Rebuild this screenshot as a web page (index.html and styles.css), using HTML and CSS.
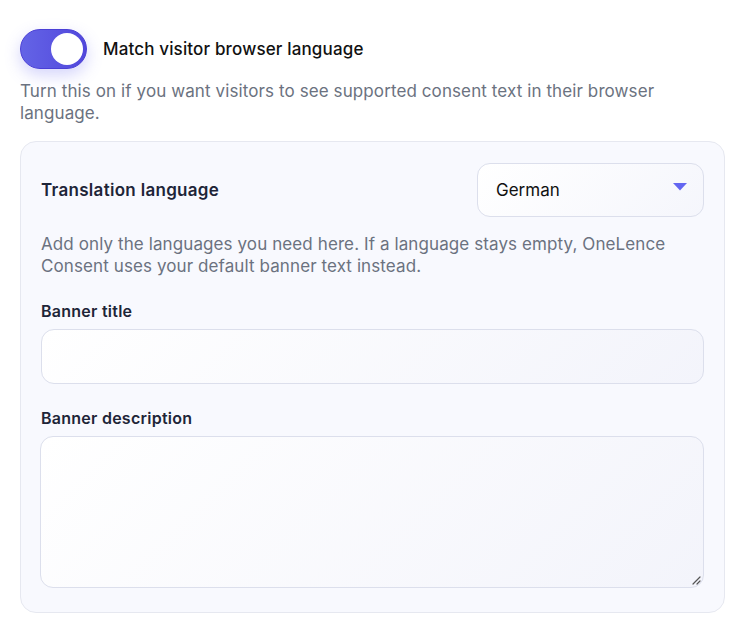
FILE: index.html
```html
<!DOCTYPE html>
<html lang="en">
<head>
<meta charset="utf-8">
<title>Translation settings</title>
<link rel="stylesheet" href="styles.css">
</head>
<body>
<div class="page">
  <label class="toggle-row">
    <span class="switch"><span class="knob"></span></span>
    <span class="toggle-label">Match visitor browser language</span>
  </label>
  <p class="hint">Turn this on if you want visitors to see supported consent text in their browser language.</p>

  <section class="card">
    <div class="lang-row">
      <span class="field-title">Translation language</span>
      <div class="select">
        <span>German</span>
        <svg class="caret" width="14" height="8" viewBox="0 0 14 8"><path d="M0 0 H14 L7 7.5 Z" fill="#6366f1"/></svg>
      </div>
    </div>
    <p class="hint card-hint">Add only the languages you need here. If a language stays empty, OneLence Consent uses your default banner text instead.</p>

    <label class="field-label">Banner title</label>
    <div class="input"></div>

    <label class="field-label">Banner description</label>
    <div class="textarea">
      <svg class="grip" width="10" height="10" viewBox="0 0 10 10"><path d="M9 2 L2 9 M9 6 L6 9" stroke="#555" stroke-width="1.2" stroke-linecap="round"/></svg>
    </div>
  </section>
</div>
</body>
</html>
```

FILE: styles.css
```css
* { box-sizing: border-box; }
html, body { margin: 0; background: #ffffff; }
body {
  font-family: Inter, "Noto Sans", "Liberation Sans", sans-serif;
  color: #111827;
}
.page {
  padding: 29px 25px 0 20px;
  width: 750px;
}
.toggle-row {
  display: flex;
  align-items: center;
  gap: 16px;
}
.switch {
  width: 67px;
  height: 40px;
  border-radius: 20px;
  background: linear-gradient(90deg, #6464e6 0%, #5147dc 100%);
  border: 1px solid #4a3fd6;
  box-shadow: 0 6px 16px rgba(99, 102, 241, 0.28);
  display: flex;
  align-items: center;
  justify-content: flex-end;
  padding-right: 3px;
}
.knob {
  width: 32px;
  height: 32px;
  border-radius: 50%;
  background: #ffffff;
}
.toggle-label {
  font-size: 17px;
  font-weight: 500;
  color: #111111;
  letter-spacing: 0.15px;
}
.hint {
  margin: 11px 0 0;
  font-size: 17px;
  line-height: 22px;
  color: #6b7280;
  letter-spacing: 0.1px;
}
.card {
  margin-top: 17px;
  border: 1px solid #e6e8f0;
  border-radius: 16px;
  background: #f8f9fe;
  padding: 21px 20px 24px 20px;
}
.lang-row {
  display: flex;
  align-items: center;
  justify-content: space-between;
}
.field-title {
  font-size: 17px;
  font-weight: 600;
  color: #1e2538;
  letter-spacing: 0.3px;
}
.select {
  width: 227px;
  height: 54px;
  border: 1px solid #dcdfec;
  border-radius: 13px;
  background: linear-gradient(135deg, #ffffff 0%, #f5f6fc 100%);
  display: flex;
  align-items: center;
  justify-content: space-between;
  padding: 0 16px 0 18px;
  font-size: 17px;
  color: #111111;
}
.caret { margin-top: -7px; }
.card-hint {
  margin-top: 16px;
}
.field-label {
  display: block;
  margin-top: 24px;
  font-size: 16px;
  line-height: 20px;
  font-weight: 600;
  color: #1e2538;
  letter-spacing: 0.25px;
}
.input {
  margin-top: 8px;
  height: 55px;
  border: 1px solid #dcdfec;
  border-radius: 13px;
  background: linear-gradient(135deg, #ffffff 0%, #f3f4fb 100%);
}
.textarea {
  margin-top: 8px;
  margin-left: -1px;
  height: 152px;
  border: 1px solid #dcdfec;
  border-radius: 13px;
  background: linear-gradient(135deg, #ffffff 0%, #f3f4fb 100%);
  display: flex;
  align-items: flex-end;
  justify-content: flex-end;
  padding: 0 2px 2px 0;
}
```
